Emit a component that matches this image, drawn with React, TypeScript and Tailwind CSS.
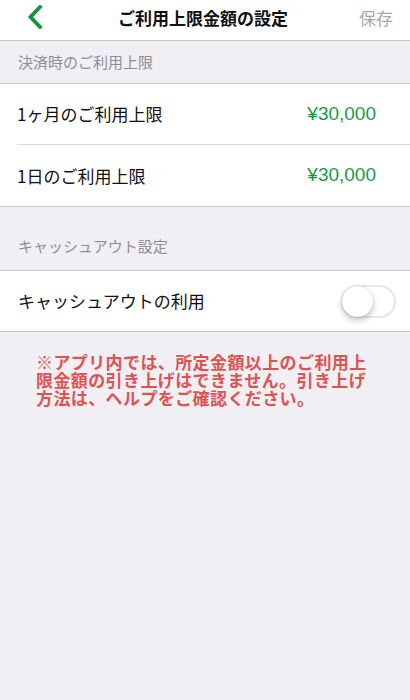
import React from "react";

const font = { fontFamily: '"Noto Sans CJK JP", "Noto Sans", sans-serif' };
const numFont = { fontFamily: '"Liberation Sans", Arial, sans-serif' };

export default function App() {
  return (
    <div
      className="w-[410px] h-[700px] bg-[#efeff4] flex flex-col"
      style={font}
    >
      {/* Header */}
      <div className="h-[41px] bg-white border-b border-[#c8c7cc] flex items-center pb-[6px] px-[17px]">
        <svg width="16" height="24" viewBox="0 0 16 24" className="ml-[10px]">
          <path
            d="M13 2 L3.5 12 L13 22"
            fill="none"
            stroke="#15953b"
            strokeWidth="3.8"
            strokeLinecap="square"
            strokeLinejoin="miter"
          />
        </svg>
        <div className="flex-1 text-center text-[17px] font-bold text-[#111] leading-none ml-[4px]">
          ご利用上限金額の設定
        </div>
        <div className="text-[17px] text-[#a9a9a9] leading-none">保存</div>
      </div>

      {/* Section 1 header */}
      <div className="h-[43px] border-b border-[#c8c7cc] flex items-center px-[18px] text-[15px] text-[#8e8e93]">
        決済時のご利用上限
      </div>

      {/* Section 1 rows */}
      <div className="bg-white border-b border-[#c8c7cc]">
        <div className="h-[60px] flex items-center pl-[17px] pr-[34px]">
          <span className="flex-1 text-[17px] text-[#111]">1ヶ月のご利用上限</span>
          <span className="text-[19px] text-[#1a9a47]" style={numFont}>
            ¥30,000
          </span>
        </div>
        <div className="h-px bg-[#dcdcdf] ml-[17px]" />
        <div className="h-[61px] flex items-center pl-[17px] pr-[34px]">
          <span className="flex-1 text-[17px] text-[#111]">1日のご利用上限</span>
          <span className="text-[19px] text-[#1a9a47]" style={numFont}>
            ¥30,000
          </span>
        </div>
      </div>

      {/* Section 2 header */}
      <div className="h-[64px] border-b border-[#c8c7cc] flex items-end pb-[13px] px-[18px] text-[15px] text-[#8e8e93]">
        キャッシュアウト設定
      </div>

      {/* Section 2 row */}
      <div className="bg-white border-b border-[#c8c7cc] h-[61px] flex items-center pl-[18px] pr-[14px]">
        <span className="flex-1 text-[17px] text-[#111]">キャッシュアウトの利用</span>
        <div className="w-[55px] h-[33px] rounded-full border-[2px] border-[#e6e6ea] bg-white relative">
          <div className="absolute left-[-1px] top-[-1px] w-[31px] h-[31px] rounded-full bg-white shadow-[0_3px_6px_rgba(0,0,0,0.25),0_0_1px_rgba(0,0,0,0.2)]" />
        </div>
      </div>

      {/* Note */}
      <div className="pt-[21px] pl-[36px] pr-[20px] text-[17px] font-bold text-[#e05252] leading-[18px] tracking-[0.4px] flex flex-col">
        <div>※アプリ内では、所定金額以上のご利用上</div>
        <div>限金額の引き上げはできません。引き上げ</div>
        <div>方法は、ヘルプをご確認ください。</div>
      </div>
    </div>
  );
}
